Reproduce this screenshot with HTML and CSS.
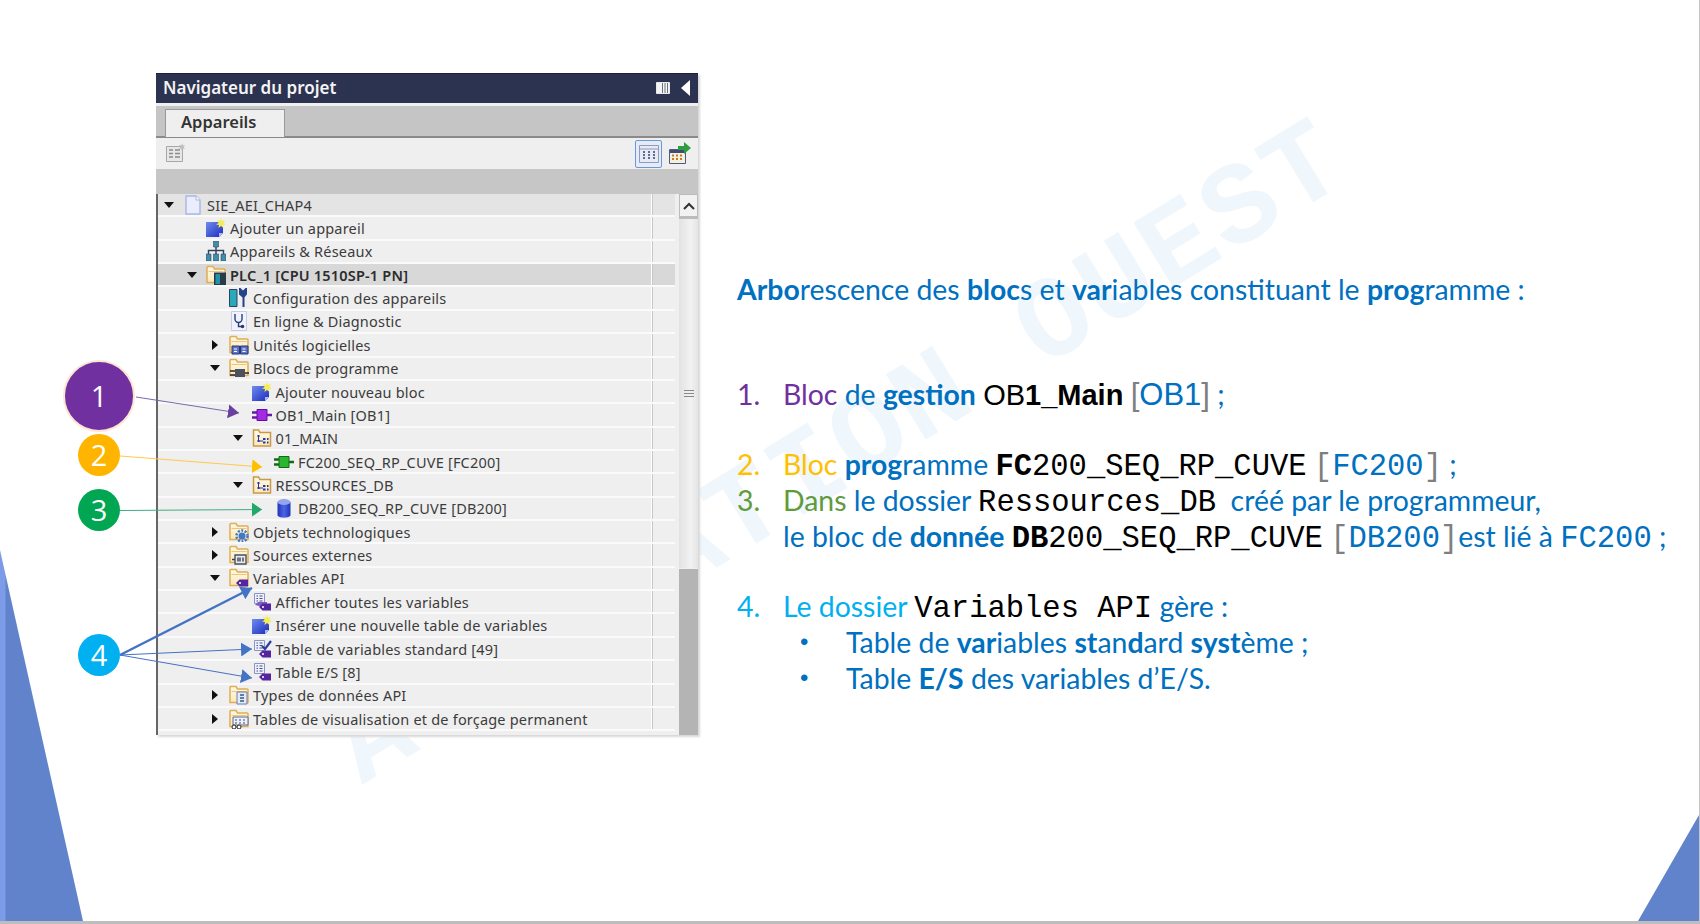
FILE: index.html
```html
<!DOCTYPE html>
<html lang="fr">
<head>
  <meta charset="UTF-8">
  <title>Arborescence du programme</title>
  <link rel="stylesheet" href="styles.css">
</head>
<body>
  <svg class="defs" width="0" height="0">
    <defs>
      <linearGradient id="blue-block" x1="0" y1="0" x2="1" y2="1">
        <stop offset="0" stop-color="#6d8cf2"/>
        <stop offset="1" stop-color="#1d2bb8"/>
      </linearGradient>
      <linearGradient id="folder-fill" x1="0" y1="0" x2="0" y2="1">
        <stop offset="0" stop-color="#fff9e6"/>
        <stop offset="1" stop-color="#fbe9b8"/>
      </linearGradient>
      <linearGradient id="db-fill" x1="0" y1="0" x2="1" y2="0">
        <stop offset="0" stop-color="#2233b8"/>
        <stop offset=".5" stop-color="#4a66e6"/>
        <stop offset="1" stop-color="#2233b8"/>
      </linearGradient>
      <symbol id="folder" viewBox="0 0 20 20">
        <path d="M1 17.500V2.500a1 1 0 0 1 1-1h5l1.500 2.500H18a1 1 0 0 1 1 1v12.500z" fill="url(#folder-fill)" stroke="#dfae55" stroke-width="1.500"/>
        <path d="M2.500 6.500h15" stroke="#e9c77f"/>
      </symbol>
      <symbol id="add" viewBox="0 0 20 20">
        <path d="M0 4h17v11l-4 4H0z" fill="url(#blue-block)"/>
        <path d="M13 19l4-4h-4z" fill="#aab8f4"/>
        <path d="M15 0l1 3 3-1-1.500 3 2.500 1.500-3 .5.500 3-2.500-2-2.500 2 .5-3-3-.5 2.500-1.500-1.500-3 3 1z" fill="#f3ec55"/>
      </symbol>
      <symbol id="tag" viewBox="0 0 20 20">
        <path d="M7 15l3.500-3.500H19v7h-8.500z" fill="#55249e"/>
        <circle cx="11" cy="15" r="1" fill="#fff"/>
      </symbol>
      <symbol id="sheet" viewBox="0 0 20 20">
        <path d="M2.500 1.500h10v10h-10z" fill="#eef0fb" stroke="#8c93c4"/>
        <path d="M4.500 4h1.500M7.500 4h3M4.500 6.500h1.500M7.500 6.500h3M4.500 9h1.500M7.500 9h3" stroke="#46508f"/>
      </symbol>
      <symbol id="tree-folder" viewBox="0 0 20 20">
        <path d="M1.500 18V2h5l1.500 2.500h10.500V18z" fill="url(#folder-fill)" stroke="#c99a45" stroke-width="1.500"/>
        <path d="M5.500 7h2v2h-2zM5.500 12h2v2h-2zM11 10h2.500v2H11zM15 10h1.500v2H15zM11 13.500h2.500v2H11zM15 13.500h1.500v2H15z" fill="#2433b0"/>
        <path d="M6.500 9v4h4.500" fill="none" stroke="#2433b0"/>
      </symbol>
    </defs>
  </svg>

  <div class="slide">
    <svg class="watermark" viewBox="0 0 1700 924" aria-hidden="true">
      <text x="0" y="0" transform="translate(362 785) rotate(-31.500)">AUTOMATION OUEST</text>
    </svg>
    <div class="corner-left"></div>
    <div class="corner-right"></div>

    <section class="panel">
      <header class="panel-title">
        <span>Navigateur du projet</span>
        <svg class="title-icons" width="46" height="18" viewBox="0 0 46 18">
          <path d="M9.500 3.500h13v11h-13z" fill="#f4f4f4" stroke="#e8e8e8"/>
          <path d="M15.500 4v10M18 4v10M20.500 4v10" stroke="#6d7184"/>
          <path d="M43 1v16l-9-8z" fill="#fff"/>
        </svg>
      </header>
      <div class="tabs"><div class="tab">Appareils</div></div>
      <div class="toolbar">
        <svg width="21" height="21" viewBox="0 0 21 21">
          <path d="M1.500 3.500h16v15h-16z" fill="#e7e7e7" stroke="#a8a8a8"/>
          <path d="M4 7h4M10 7h5M4 10.500h4M10 10.500h5M4 14h4M10 14h5" stroke="#8c8c8c" stroke-width="1.500"/>
          <path d="M17 0l.8 2.500 2.200-.5-1.400 2 1.400 2-2.200-.5-.8 2.500-.8-2.500-2.200.5 1.400-2-1.400-2 2.200.5z" fill="#bdbdbd"/>
        </svg>
        <span class="tool-spacer"></span>
        <span class="tool-active">
          <svg width="20" height="18" viewBox="0 0 20 18">
            <path d="M.5.500h19v17H.5z" fill="#e8ebf6" stroke="#8f9bb8"/>
            <path d="M1 4h18" stroke="#8f9bb8"/>
            <path d="M4 7h2M9 7h2M14 7h2M4 10h2M9 10h2M14 10h2M4 13h2M9 13h2M14 13h2" stroke="#5d6d96" stroke-width="2"/>
          </svg>
        </span>
        <svg class="tool-last" width="24" height="24" viewBox="0 0 24 24">
          <path d="M1.500 7.500h16v14h-16z" fill="#f4f0de" stroke="#50597f"/>
          <path d="M2 8h15v3H2z" fill="#3f4a78"/>
          <path d="M4 13.500h2M8 13.500h2M12 13.500h2M4 17h2M8 17h2M12 17h2" stroke="#c9781f" stroke-width="2"/>
          <path d="M10 4h6V0l7 6-7 6V8h-6z" fill="#2f9e3f"/>
        </svg>
      </div>
      <div class="band"></div>

      <div class="tree-wrap">
        <ul class="tree">
          <li class="row head lv0"><i class="exp down"></i>
            <svg class="ico" viewBox="0 0 20 20"><path d="M3 1h10l4 4v14H3z" fill="#e9edfc" stroke="#a9b5e6" stroke-width="1.400"/><path d="M13 1v4h4" fill="#fff" stroke="#a9b5e6"/></svg>
            <span>SIE_AEI_CHAP4</span></li>
          <li class="row lv1"><i class="exp"></i><svg class="ico"><use href="#add"/></svg><span>Ajouter un appareil</span></li>
          <li class="row lv1"><i class="exp"></i>
            <svg class="ico" viewBox="0 0 20 20"><path d="M7.500 0h5v6h-5zM0 13h5v7H0zM7.500 13h5v7h-5zM15 13h5v7h-5z" fill="#3f8fa8" stroke="#2f4668" stroke-width=".6"/><path d="M10 6v7M2.500 13V9.500h15V13" fill="none" stroke="#33415e" stroke-width="1.400"/></svg>
            <span>Appareils &amp; Réseaux</span></li>
          <li class="row current lv1"><i class="exp down"></i>
            <svg class="ico"><use href="#folder"/><path d="M8 7.500h12V20H8z" fill="#2c3a48"/><path d="M9.500 9h4.500v10H9.500z" fill="#1f93aa"/></svg>
            <span class="bold">PLC_1 [CPU 1510SP-1 PN]</span></li>
          <li class="row lv2"><i class="exp"></i>
            <svg class="ico" viewBox="0 0 20 20"><path d="M.5 1.500h7.500v17H.5z" fill="#2aa9bb" stroke="#2c4263"/><path d="M14.500 9l-3.500-3V1l3 3 3-3v5zM14.500 8v11" fill="#25438a" stroke="#25438a" stroke-width="2"/></svg>
            <span>Configuration des appareils</span></li>
          <li class="row lv2"><i class="exp"></i>
            <svg class="ico" viewBox="0 0 20 20"><path d="M2.500 .5h15v19h-15z" fill="#f1f2fc" stroke="#c6cbea"/><path d="M6 3v5a3.500 3.500 0 0 0 7 0V3M9.500 11.500v4h2.500" fill="none" stroke="#28407a" stroke-width="1.400"/><circle cx="13.500" cy="15.500" r="1.800" fill="#2a3a6a"/></svg>
            <span>En ligne &amp; Diagnostic</span></li>
          <li class="row lv2"><i class="exp right"></i>
            <svg class="ico"><use href="#folder"/><path d="M3 11h7.500v8H3zM11.500 11H19v8h-7.500z" fill="#5d73c9" stroke="#2a3570"/><path d="M5 14h3M5 16.500h3M13.500 14h3M13.500 16.500h3" stroke="#fff"/></svg>
            <span>Unités logicielles</span></li>
          <li class="row lv2"><i class="exp down"></i>
            <svg class="ico"><use href="#folder"/><path d="M6 11h10v8H6z" fill="#4a5260"/><path d="M1 13h5M1 17h5M16 15h4" stroke="#23262e" stroke-width="1.600"/></svg>
            <span>Blocs de programme</span></li>
          <li class="row lv3"><i class="exp"></i><svg class="ico"><use href="#add"/></svg><span>Ajouter nouveau bloc</span></li>
          <li class="row lv3"><i class="exp"></i>
            <svg class="ico" viewBox="0 0 20 20"><path d="M5 4.500h10v11H5z" fill="#a428e6" stroke="#5e1396"/><path d="M0 7.500h5M0 12.500h5M15 10h5" stroke="#6a18a8" stroke-width="2.400"/></svg>
            <span>OB1_Main [OB1]</span></li>
          <li class="row lv3"><i class="exp down"></i>
            <svg class="ico"><use href="#tree-folder"/></svg>
            <span>01_MAIN</span></li>
          <li class="row lv4"><i class="exp"></i>
            <svg class="ico" viewBox="0 0 20 20"><path d="M5 4.500h10v11H5z" fill="#2cb52f" stroke="#136a16"/><path d="M0 7.500h5M0 12.500h5M15 10h5" stroke="#136a16" stroke-width="2.400"/></svg>
            <span>FC200_SEQ_RP_CUVE [FC200]</span></li>
          <li class="row lv3"><i class="exp down"></i>
            <svg class="ico"><use href="#tree-folder"/></svg>
            <span>RESSOURCES_DB</span></li>
          <li class="row lv4"><i class="exp"></i>
            <svg class="ico" viewBox="0 0 20 20"><path d="M3.500 4v13c0 3.500 13 3.500 13 0V4z" fill="url(#db-fill)"/><ellipse cx="10" cy="4" rx="6.500" ry="3" fill="#93a4f0"/></svg>
            <span>DB200_SEQ_RP_CUVE [DB200]</span></li>
          <li class="row lv2"><i class="exp right"></i>
            <svg class="ico"><use href="#folder"/><circle cx="13" cy="14" r="3.500" fill="#3f78cc"/><circle cx="13" cy="14" r="5.500" fill="none" stroke="#3f78cc" stroke-width="2.500" stroke-dasharray="2 1.500"/></svg>
            <span>Objets technologiques</span></li>
          <li class="row lv2"><i class="exp right"></i>
            <svg class="ico"><use href="#folder"/><path d="M6 10h11v9H6z" fill="#e9e9e9" stroke="#4a5260" stroke-width="1.400"/><path d="M3 14.500h3M9 12.500v4M11 12.500v4M14 12.500v4" stroke="#35405c" stroke-width="1.400"/></svg>
            <span>Sources externes</span></li>
          <li class="row lv2"><i class="exp down"></i>
            <svg class="ico"><use href="#folder"/><use href="#tag"/></svg>
            <span>Variables API</span></li>
          <li class="row lv3"><i class="exp"></i>
            <svg class="ico"><use href="#sheet"/><path d="M3 13l3-3h9v4H7z" fill="#7d5cc6"/><use href="#tag"/></svg>
            <span>Afficher toutes les variables</span></li>
          <li class="row lv3"><i class="exp"></i><svg class="ico"><use href="#add"/></svg><span>Insérer une nouvelle table de variables</span></li>
          <li class="row lv3"><i class="exp"></i>
            <svg class="ico"><use href="#sheet"/><path d="M10 7l3 3 6-8" fill="none" stroke="#2b3f9e" stroke-width="2.200"/><use href="#tag"/></svg>
            <span>Table de variables standard [49]</span></li>
          <li class="row lv3"><i class="exp"></i>
            <svg class="ico"><use href="#sheet"/><use href="#tag"/></svg>
            <span>Table E/S [8]</span></li>
          <li class="row lv2"><i class="exp right"></i>
            <svg class="ico"><use href="#folder"/><path d="M8 7h10v12H8z" fill="#e6e9fa" stroke="#6f7fb0"/><path d="M11 10h4M11 13h4M11 16h4" stroke="#2f5f7a" stroke-width="1.400"/></svg>
            <span>Types de données API</span></li>
          <li class="row lv2"><i class="exp right"></i>
            <svg class="ico"><use href="#folder"/><path d="M4 8h15v8H4z" fill="#eef0fb" stroke="#5a6a8a"/><path d="M6 11h2M10 11h2M14 11h2M6 14h2M10 14h2M14 14h2" stroke="#3a4a7a"/><circle cx="5" cy="18" r="2" fill="#fff" stroke="#23262e"/><circle cx="10" cy="18" r="2" fill="#fff" stroke="#23262e"/></svg>
            <span>Tables de visualisation et de forçage permanent</span></li>
        </ul>
        <div class="scrollbar">
          <div class="scroll-up">
            <svg width="12" height="8" viewBox="0 0 12 8"><path d="M1 7l5-5 5 5" fill="none" stroke="#333" stroke-width="2"/></svg>
          </div>
          <div class="scroll-thumb"><i></i><i></i><i></i></div>
        </div>
      </div>
    </section>

    <section class="notes">
      <p class="lead"><b>Arbo</b>rescence des <b>bloc</b>s et <b>var</b>iables constituant le <b>prog</b>ramme :</p>

      <div class="item item-one">
        <span class="num purple">1.</span>
        <p><span class="purple">Bloc</span> de <b>gestion</b> <span class="arial">OB<strong>1_Main</strong></span> <span class="arial ref"><em>[</em>OB1<em>]</em></span> ;</p>
      </div>

      <div class="item item-two">
        <span class="num yellow">2.</span>
        <p><span class="yellow">Bloc</span> <b>prog</b>ramme <span class="mono"><strong>FC</strong>200_SEQ_RP_CUVE</span> <span class="mono ref"><em>[</em>FC200<em>]</em></span> ;</p>
      </div>
      <div class="item">
        <span class="num green">3.</span>
        <p><span class="green">Dans</span> le dossier <span class="mono">Ressources_DB</span>&nbsp; créé par le programmeur,<br>
        le bloc de <b>donnée</b> <span class="mono"><strong>DB</strong>200_SEQ_RP_CUVE</span> <span class="mono ref"><em>[</em>DB200<em>]</em></span>est lié à <span class="mono ref">FC200</span> ;</p>
      </div>

      <div class="item item-four">
        <span class="num cyan">4.</span>
        <p><span class="cyan">Le dossier</span> <span class="mono">Variables API</span> gère :</p>
      </div>
      <ul class="bullets">
        <li>Table de <b>var</b>iables <b>st</b>an<b>d</b>ard <b>syst</b>ème ;</li>
        <li>Table <b>E/S</b> des variables d’E/S.</li>
      </ul>
    </section>

    <svg class="arrows" viewBox="0 0 1700 924" aria-hidden="true">
      <defs>
        <marker id="h-purple" markerUnits="userSpaceOnUse" markerWidth="12" markerHeight="14" refX="11" refY="7" orient="auto"><path class="head" d="M0 0l11 7-11 7z" fill="#6a3fa0"/></marker>
        <marker id="h-yellow" markerUnits="userSpaceOnUse" markerWidth="10" markerHeight="14" refX="10" refY="7" orient="auto"><path class="head" d="M0 0l10 7-10 7z" fill="#ffc000"/></marker>
        <marker id="h-green" markerUnits="userSpaceOnUse" markerWidth="10" markerHeight="14" refX="10" refY="7" orient="auto"><path class="head" d="M0 0l10 7-10 7z" fill="#22a86a"/></marker>
        <marker id="h-blue" markerUnits="userSpaceOnUse" markerWidth="12" markerHeight="14" refX="11" refY="7" orient="auto"><path class="head" d="M0 0l11 7-11 7z" fill="#4472c4"/></marker>
      </defs>
      <path class="line" d="M136 397L239 413" stroke="#7a68b0" marker-end="url(#h-purple)"/>
      <path class="line" d="M120 456L262 467" stroke="#ffc94a" marker-end="url(#h-yellow)"/>
      <path class="line" d="M120 510.500L262 509.500" stroke="#3fae80" marker-end="url(#h-green)"/>
      <path class="line" d="M120 655L252 588" stroke="#4472c4" stroke-width="2.500" marker-end="url(#h-blue)"/>
      <path class="line" d="M120 655L252 649" stroke="#4472c4" marker-end="url(#h-blue)"/>
      <path class="line" d="M120 655L252 678" stroke="#4472c4" marker-end="url(#h-blue)"/>
    </svg>

    <div class="badge badge-big badge-1">1</div>
    <div class="badge badge-2">2</div>
    <div class="badge badge-3">3</div>
    <div class="badge badge-4">4</div>
  </div>
</body>
</html>
```

FILE: styles.css
```css
body {
  margin: 0;
  background: #fff;
}
.defs {
  position: absolute;
}
.slide {
  position: relative;
  display: flex;
  align-items: flex-start;
  box-sizing: border-box;
  width: 1700px;
  height: 924px;
  padding: 73px 0 0 156px;
  overflow: hidden;
  border-right: 1px solid #c4c4c4;
  border-bottom: 3px solid #bdbdbd;
}
.watermark, .arrows {
  position: absolute;
  left: 0;
  top: 0;
  width: 1700px;
  height: 924px;
}
.watermark text {
  font-family: "Liberation Mono", monospace;
  font-weight: bold;
  font-size: 116px;
  letter-spacing: 3px;
  fill: #eff6fc;
}
.arrows .line {
  fill: none;
}
.corner-left {
  position: absolute;
  left: 0;
  bottom: 0;
  width: 83px;
  height: 371px;
  background: linear-gradient(90deg, #7c9be8 5px, #6083cb 6px);
  clip-path: polygon(0 0, 100% 100%, 0 100%);
}
.corner-right {
  position: absolute;
  right: 0;
  bottom: 0;
  width: 61px;
  height: 106px;
  background: #6083cb;
  clip-path: polygon(100% 0, 100% 100%, 0 100%);
}

/* panneau TIA */
.panel {
  position: relative;
  width: 542px;
  height: 662px;
  flex: none;
  display: flex;
  flex-direction: column;
  background: #efefef;
  box-shadow: 2px 2px 2px #d8d8d8;
  font-family: "Noto Sans", sans-serif;
  color: #3c3c3c;
}
.panel-title {
  display: flex;
  justify-content: space-between;
  align-items: center;
  box-sizing: border-box;
  height: 30px;
  padding: 0 5px 2px 7px;
  background: #2b3350;
  border-top: 1px solid #1c2138;
  color: #f4f4f4;
  font-size: 17px;
  font-weight: 600;
}
.tabs {
  box-sizing: border-box;
  height: 32px;
  margin-top: 3px;
  padding: 3px 0 0 9px;
  background: #c5c5c5;
  border-bottom: 2px solid #8a8a8a;
}
.tab {
  box-sizing: border-box;
  width: 120px;
  height: 28px;
  padding-left: 15px;
  background: #efefef;
  border: 1px solid #999;
  border-bottom: none;
  color: #333;
  font-size: 16.500px;
  font-weight: 600;
  line-height: 24px;
}
.toolbar {
  display: flex;
  align-items: center;
  box-sizing: border-box;
  height: 31px;
  padding: 0 6px 0 9px;
  background: #efefef;
}
.tool-spacer {
  flex: 1;
}
.tool-active {
  display: flex;
  align-items: center;
  justify-content: center;
  box-sizing: border-box;
  width: 27px;
  height: 28px;
  margin-right: 6px;
  background: #e4ecfa;
  border: 1px solid #6e97d6;
  border-radius: 2px;
}
.band {
  height: 25px;
  background: #c6c6c6;
}
.tree-wrap {
  flex: 1;
  display: flex;
  min-height: 0;
  border-left: 2px solid #666;
}
.tree {
  flex: 1;
  margin: 0;
  padding: 0;
  list-style: none;
  font-size: 14.500px;
  letter-spacing: .2px;
}
.row {
  display: flex;
  align-items: center;
  box-sizing: border-box;
  height: 23.360px;
  margin-right: 4px;
  background: linear-gradient(90deg, transparent 493px, #fff 493px, #fff 494px, #c8c8c8 494px, #c8c8c8 495px, transparent 495px);
  border-bottom: 2px solid #fafafa;
  white-space: nowrap;
}
.row.head {
  background-color: #e4e4e4;
}
.row.current {
  background-color: #d8d8d8;
}
.bold {
  font-weight: 600;
  color: #2c2c2c;
}
.lv0 { padding-left: 4px; }
.lv1 { padding-left: 27px; }
.lv2 { padding-left: 50px; }
.lv3 { padding-left: 72.500px; }
.lv4 { padding-left: 95px; }
.exp {
  flex: none;
  width: 14px;
  height: 10px;
  margin-right: 7px;
  position: relative;
}
.exp.down::after {
  content: "";
  position: absolute;
  left: 2px;
  top: 2px;
  border: 5px solid transparent;
  border-top: 6px solid #111;
  border-bottom: none;
}
.exp.right::after {
  content: "";
  position: absolute;
  left: 4px;
  top: 0;
  border: 5px solid transparent;
  border-left: 6px solid #111;
  border-right: none;
}
.ico {
  flex: none;
  width: 20px;
  height: 20px;
  margin-right: 4px;
}
.scrollbar {
  flex: none;
  width: 19px;
  background: #b4b4b4;
}
.scroll-up {
  display: flex;
  align-items: center;
  justify-content: center;
  box-sizing: border-box;
  height: 25px;
  background: #f2f2f2;
  border: 1px solid #bcbcbc;
  border-bottom: 3px solid #bcbcbc;
}
.scroll-thumb {
  display: flex;
  flex-direction: column;
  align-items: center;
  justify-content: center;
  gap: 2px;
  height: 349px;
  background: linear-gradient(90deg, #e2e2e2, #f2f2f2 60%, #e4e4e4);
  border-bottom: 1px solid #eee;
}
.scroll-thumb i {
  width: 10px;
  height: 1px;
  background: #888;
}

/* texte de droite */
.notes {
  position: relative;
  margin: 198px 0 0 39px;
  color: #0070c0;
  font-family: "Lato", sans-serif;
  font-size: 28.400px;
  line-height: 36px;
  white-space: nowrap;
}
.notes p {
  margin: 0;
}
.notes b {
  font-weight: 700;
}
.item {
  display: flex;
}
.item-one { margin-top: 69px; }
.item-two { margin-top: 34px; }
.item-four { margin-top: 34px; }
.num {
  width: 46px;
  flex: none;
}
.purple { color: #7030a0; }
.yellow { color: #ffc000; }
.green { color: #5f9b3a; }
.cyan { color: #00b0f0; }
.arial {
  font-family: "Liberation Sans", sans-serif;
  font-size: 29px;
  line-height: 0;
  color: #000;
}
.arial.ref {
  font-size: 31px;
}
.mono {
  font-family: "Liberation Mono", monospace;
  font-size: 30.500px;
  line-height: 0;
  color: #000;
}
.notes .ref {
  color: #0070c0;
}
.ref em {
  font-style: normal;
  color: #7f7f7f;
}
.bullets {
  margin: 0;
  padding: 0 0 0 109px;
  list-style: none;
}
.bullets li {
  position: relative;
}
.bullets li::before {
  content: "•";
  position: absolute;
  left: -46px;
  font-family: "Liberation Sans", sans-serif;
  font-size: 24px;
}

/* pastilles */
.badge {
  position: absolute;
  left: 78px;
  width: 42px;
  height: 42px;
  border-radius: 50%;
  color: #fff;
  font-family: "Open Sans", sans-serif;
  font-size: 29px;
  line-height: 42px;
  text-align: center;
}
.badge-big {
  left: 63px;
  width: 72px;
  height: 72px;
  line-height: 68px;
  box-sizing: border-box;
  border: 2px solid #fbe6d3;
}
.badge-1 { top: 360px; background: #7030a0; }
.badge-2 { top: 434px; background: #ffb400; }
.badge-3 { top: 489px; background: #00a651; }
.badge-4 { top: 634px; background: #00b0f0; }
```
